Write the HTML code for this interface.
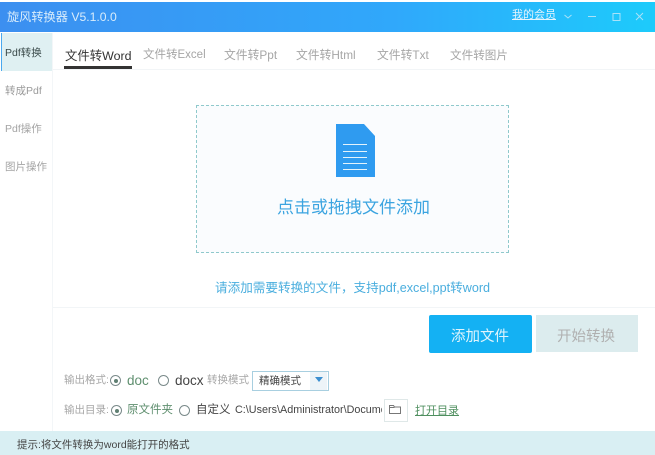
<!DOCTYPE html>
<html><head><meta charset="utf-8">
<style>
html,body{margin:0;padding:0;background:#fff;}
body{width:655px;height:455px;position:relative;overflow:hidden;font-family:"Liberation Sans","Noto Sans CJK SC",sans-serif;}
#w{position:absolute;left:0;top:0;width:655px;height:455px;filter:blur(.35px);}
.a{position:absolute;white-space:nowrap;line-height:1;}
.r{position:absolute;width:9px;height:9px;border:1px solid #7a8a8a;border-radius:50%;background:#fff;}
.r.on:after{content:"";position:absolute;left:2.5px;top:2.5px;width:4px;height:4px;border-radius:50%;background:#5f7f72;}
</style></head><body><div id="w">
<div class="a" style="left:0;top:2px;width:655px;height:30px;background:linear-gradient(90deg,#3c8ff0 0%,#30a8fb 60%,#1dcbfb 100%);"></div>
<div class="a" style="left:7px;top:11px;font-size:12.200px;color:#d8ecfb;">旋风转换器 V5.1.0.0</div>
<div class="a" style="left:512px;top:10px;font-size:11px;color:#e4f4fc;text-decoration:underline;">我的会员</div>
<svg class="a" style="left:560px;top:10px" width="95" height="14" fill="none" stroke="#a9e2f8" stroke-width="1"><path d="M4.500 5l3.500 3 3.500-3"/><path d="M28 6.500h8"/><rect x="53" y="3.500" width="7" height="7"/><path d="M76 3l7 7M83 3l-7 7"/></svg>

<div class="a" style="left:1px;top:33px;width:51px;height:38px;background:#dff0f2;border-left:1px solid #4aa8ee;"></div>
<div class="a" style="left:52px;top:33px;width:1px;height:398px;background:#f3f6f8;"></div>
<div class="a" style="left:5px;top:48px;font-size:10.500px;color:#3a4a4a;">Pdf转换</div>
<div class="a" style="left:5px;top:86px;font-size:10.500px;color:#9a9a9a;">转成Pdf</div>
<div class="a" style="left:5px;top:124px;font-size:10.500px;color:#a4a4a4;">Pdf操作</div>
<div class="a" style="left:5px;top:162px;font-size:10.500px;color:#a4a4a4;">图片操作</div>

<div class="a" style="left:65px;top:50px;font-size:12.400px;color:#333;">文件转Word</div>
<div class="a" style="left:64px;top:66px;width:68px;height:3px;background:#333;"></div>
<div class="a" style="left:53px;top:69px;width:602px;height:1px;background:#f2f5f7;"></div>
<div class="a" style="left:143px;top:50px;font-size:11.500px;color:#a6a6a6;">文件转Excel</div>
<div class="a" style="left:224px;top:50px;font-size:11.800px;color:#a6a6a6;">文件转Ppt</div>
<div class="a" style="left:296px;top:50px;font-size:11.800px;color:#a6a6a6;">文件转Html</div>
<div class="a" style="left:377px;top:50px;font-size:11.800px;color:#a6a6a6;">文件转Txt</div>
<div class="a" style="left:450px;top:50px;font-size:11.600px;color:#a6a6a6;">文件转图片</div>

<div class="a" style="left:196px;top:105px;width:311px;height:146px;background:#fafcfe;border:1px dashed #8fc9cc;"></div>
<svg class="a" style="left:335px;top:123px" width="42" height="56"><path d="M1 1h28l11 12v41H1z" fill="#2f9bf0"/><path d="M8 21.500h24M8 28.500h24M8 34.500h24M8 40.500h24M8 46.500h24" stroke="#e4f3fc" stroke-width="1" fill="none"/></svg>
<div class="a" style="left:277px;top:199px;font-size:17px;color:#3ba4e0;">点击或拖拽文件添加</div>
<div class="a" style="left:215px;top:282px;font-size:12.600px;color:#4aaede;">请添加需要转换的文件，支持pdf,excel,ppt转word</div>
<div class="a" style="left:53px;top:307px;width:602px;height:1px;background:#f2f5f7;"></div>

<div class="a" style="left:429px;top:315px;width:103px;height:38px;background:#14b1f3;border-radius:2px;"></div>
<div class="a" style="left:451px;top:330px;font-size:14.500px;color:#dff4fc;">添加文件</div>
<div class="a" style="left:536px;top:315px;width:102px;height:37px;background:#dcecee;"></div>
<div class="a" style="left:557px;top:330px;font-size:14.500px;color:#b0b0b0;">开始转换</div>

<div class="a" style="left:64px;top:375px;font-size:10.500px;color:#a6a6a6;">输出格式:</div>
<div class="r on" style="left:110px;top:375px;"></div>
<div class="a" style="left:127px;top:374px;font-size:13.500px;color:#5f8f6f;">doc</div>
<div class="r" style="left:158px;top:375px;"></div>
<div class="a" style="left:175px;top:374px;font-size:13.500px;color:#444;">docx</div>
<div class="a" style="left:207px;top:375px;font-size:10.500px;color:#a6a6a6;">转换模式</div>
<div class="a" style="left:252px;top:371px;width:75px;height:18px;border:1px solid #a8cfe0;background:#fff;"></div>
<div class="a" style="left:259px;top:376px;font-size:10.500px;color:#444;">精确模式</div>
<div class="a" style="left:310px;top:372px;width:17px;height:18px;background:#edf4f8;"></div>
<svg class="a" style="left:314px;top:376px" width="10" height="8"><path d="M1 1h8L5 6z" fill="#3b8fd0"/></svg>

<div class="a" style="left:64px;top:405px;font-size:10.500px;color:#a6a6a6;">输出目录:</div>
<div class="r on" style="left:111px;top:405px;"></div>
<div class="a" style="left:127px;top:405px;font-size:11.500px;color:#5f8f6f;">原文件夹</div>
<div class="r" style="left:179px;top:405px;"></div>
<div class="a" style="left:196px;top:405px;font-size:11.500px;color:#444;">自定义</div>
<div class="a" style="left:235px;top:405px;width:147px;overflow:hidden;font-size:10.800px;color:#444;">C:\Users\Administrator\Documents</div>
<div class="a" style="left:384px;top:399px;width:22px;height:21px;border:1px solid #dfe8e8;background:#fff;"></div>
<svg class="a" style="left:388px;top:403px" width="14" height="12" fill="none" stroke="#777" stroke-width="1"><path d="M1.500 2.500h4l1 1.500h6v6.500h-11zM1.500 4.500h5"/></svg>
<div class="a" style="left:415px;top:406px;font-size:11px;color:#4f8f5f;text-decoration:underline;">打开目录</div>

<div class="a" style="left:0;top:431px;width:655px;height:24px;background:#d9eff3;"></div>
<div class="a" style="left:17px;top:440px;font-size:10.500px;color:#444;">提示:将文件转换为word能打开的格式</div>
</div></body></html>
